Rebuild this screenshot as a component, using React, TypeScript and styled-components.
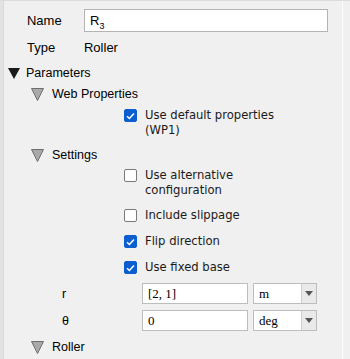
import styled, { createGlobalStyle } from "styled-components";

const GlobalStyle = createGlobalStyle`
  html, body {
    margin: 0;
    padding: 0;
    background: #f0f0f0;
  }
  body {
    font-family: "Liberation Sans", Arial, sans-serif;
    color: #000;
  }
`;

const Frame = styled.div`
  width: 350px;
  height: 359px;
  display: flex;
  background: #f0f0f0;
  border-top: 1px solid #dcdcdc;
  box-sizing: border-box;
  overflow: hidden;
`;

const LeftStrip = styled.div`
  width: 3px;
  background: #e3e3e3;
  border-right: 1px solid #d9d9d9;
`;

const Panel = styled.div`
  width: 339px;
  display: flex;
  flex-direction: column;
  padding-top: 8px;
  box-sizing: border-box;
`;

const RightEdge = styled.div`
  width: 7px;
  border-left: 1px solid #fbfbfb;
  background: #f0f0f0;
`;

const FieldRow = styled.div<{ $top: number; $h: number }>`
  display: flex;
  align-items: center;
  margin-top: ${(p) => p.$top}px;
  height: ${(p) => p.$h}px;
  padding-left: 23px;
  font-size: 13px;
`;

const FieldLabel = styled.span`
  width: 57px;
`;

const NameInput = styled.div`
  width: 244px;
  height: 23px;
  box-sizing: border-box;
  background: #fff;
  border: 1px solid #b4b4b4;
  display: flex;
  align-items: center;
  padding-left: 5px;
  font-size: 13px;
`;

const Sub = styled.span`
  font-size: 9px;
  position: relative;
  top: 4px;
`;

const Header = styled.div<{ $top: number; $indent: number }>`
  display: flex;
  align-items: center;
  height: 18px;
  margin-top: ${(p) => p.$top}px;
  padding-left: ${(p) => p.$indent}px;
  font-size: 12.5px;
  gap: ${(p) => (p.$indent > 10 ? 8 : 6)}px;
`;

const Option = styled.label<{ $top: number }>`
  display: flex;
  align-items: flex-start;
  margin-top: ${(p) => p.$top}px;
  padding-left: 120px;
  gap: 8px;
  font-family: "DejaVu Sans", Verdana, sans-serif;
  font-size: 11.6px;
  line-height: 15px;
  color: #1a1a1a;
`;

const Box = styled.span<{ $on: boolean }>`
  flex: none;
  width: 13px;
  height: 13px;
  margin-top: 1px;
  box-sizing: border-box;
  border-radius: 2px;
  background: ${(p) => (p.$on ? "#0b5ed0" : "#fff")};
  border: 1px solid ${(p) => (p.$on ? "#0b5ed0" : "#7a7a7a")};
  display: flex;
  align-items: center;
  justify-content: center;
`;

const ParamRow = styled.div<{ $top: number }>`
  display: flex;
  align-items: center;
  margin-top: ${(p) => p.$top}px;
  height: 21px;
  padding-left: 58px;
`;

const ParamLabel = styled.span`
  width: 80px;
  font-size: 12.5px;
`;

const ValueInput = styled.div`
  width: 106px;
  height: 21px;
  box-sizing: border-box;
  background: #fff;
  border: 1px solid #bdbdbd;
  padding-left: 5px;
  display: flex;
  align-items: center;
  font-family: "Liberation Serif", "Times New Roman", serif;
  font-size: 13px;
`;

const Select = styled.div`
  margin-left: 5px;
  width: 64px;
  height: 21px;
  box-sizing: border-box;
  background: #fff;
  border: 1px solid #bdbdbd;
  display: flex;
  font-family: "Liberation Serif", "Times New Roman", serif;
  font-size: 13px;
`;

const SelectText = styled.span`
  flex: 1;
  display: flex;
  align-items: center;
  padding-left: 5px;
`;

const SelectButton = styled.span`
  width: 14px;
  background: #e9e9e9;
  border-left: 1px solid #cfcfcf;
  display: flex;
  align-items: center;
  justify-content: center;
`;

const Arrow = () => (
  <svg width="8" height="5" viewBox="0 0 8 5">
    <path d="M0 0 H8 L4 5 Z" fill="#555" />
  </svg>
);

const Triangle = ({ filled }: { filled?: boolean }) =>
  filled ? (
    <svg width="12" height="11" viewBox="0 0 12 11">
      <path d="M0 0 H12 L6 11 Z" fill="#1a1a1a" />
    </svg>
  ) : (
    <svg width="13" height="13" viewBox="0 0 13 13">
      <path d="M0.5 0.5 H12.5 L6.5 12.5 Z" fill="#a9a9a9" stroke="#6e6e6e" />
    </svg>
  );

const Check = () => (
  <svg width="9" height="8" viewBox="0 0 9 8">
    <path d="M1 4.2 L3.4 6.5 L8 1.5" fill="none" stroke="#fff" strokeWidth="1.5" />
  </svg>
);

const CheckOption = ({ on, top, children }: { on: boolean; top: number; children: React.ReactNode }) => (
  <Option $top={top}>
    <Box $on={on}>{on && <Check />}</Box>
    <span>{children}</span>
  </Option>
);

export default function App() {
  return (
    <>
      <GlobalStyle />
      <Frame>
        <LeftStrip />
        <Panel>
          <FieldRow $top={0} $h={23}>
            <FieldLabel>Name</FieldLabel>
            <NameInput>
              <span>
                R<Sub>3</Sub>
              </span>
            </NameInput>
          </FieldRow>
          <FieldRow $top={5} $h={20}>
            <FieldLabel>Type</FieldLabel>
            <span>Roller</span>
          </FieldRow>
          <Header $top={7} $indent={4}>
            <Triangle filled />
            Parameters
          </Header>
          <Header $top={3} $indent={27}>
            <Triangle />
            Web Properties
          </Header>
          <CheckOption on top={5}>
            Use default properties
            <br />
            (WP1)
          </CheckOption>
          <Header $top={8} $indent={27}>
            <Triangle />
            Settings
          </Header>
          <CheckOption on={false} top={4}>
            Use alternative
            <br />
            configuration
          </CheckOption>
          <CheckOption on={false} top={10}>
            Include slippage
          </CheckOption>
          <CheckOption on top={11}>
            Flip direction
          </CheckOption>
          <CheckOption on top={11}>
            Use fixed base
          </CheckOption>
          <ParamRow $top={8}>
            <ParamLabel>r</ParamLabel>
            <ValueInput>[2, 1]</ValueInput>
            <Select>
              <SelectText>m</SelectText>
              <SelectButton>
                <Arrow />
              </SelectButton>
            </Select>
          </ParamRow>
          <ParamRow $top={6}>
            <ParamLabel>θ</ParamLabel>
            <ValueInput>0</ValueInput>
            <Select>
              <SelectText>deg</SelectText>
              <SelectButton>
                <Arrow />
              </SelectButton>
            </Select>
          </ParamRow>
          <Header $top={7} $indent={27}>
            <Triangle />
            Roller
          </Header>
        </Panel>
        <RightEdge />
      </Frame>
    </>
  );
}
